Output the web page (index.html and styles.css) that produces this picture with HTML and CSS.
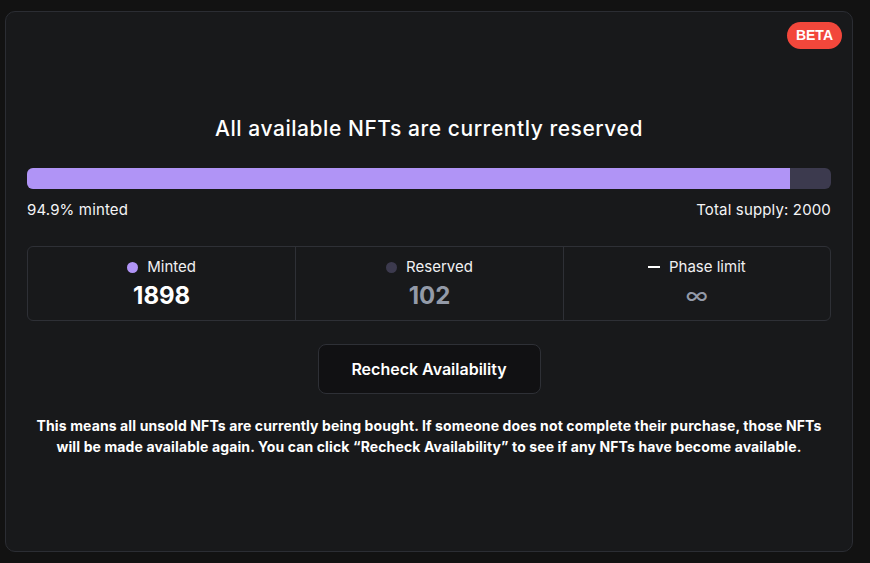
FILE: index.html
```html
<!DOCTYPE html>
<html>
<head>
<meta charset="utf-8">
<link rel="stylesheet" href="styles.css">
</head>
<body>
<div class="card">
  <span class="badge">BETA</span>
  <h1 class="title">All available NFTs are currently reserved</h1>
  <div class="bar"><div class="fill" style="width:94.9%"></div></div>
  <div class="labels">
    <span>94.9% minted</span>
    <span>Total supply: 2000</span>
  </div>
  <div class="stats">
    <div class="stat">
      <div class="stat-label"><span class="dot dot-minted"></span>Minted</div>
      <div class="stat-value">1898</div>
    </div>
    <div class="stat">
      <div class="stat-label"><span class="dot dot-reserved"></span>Reserved</div>
      <div class="stat-value muted">102</div>
    </div>
    <div class="stat">
      <div class="stat-label"><span class="dash"></span>Phase limit</div>
      <div class="stat-value muted inf">∞</div>
    </div>
  </div>
  <div class="actions">
    <button class="btn">Recheck Availability</button>
  </div>
  <p class="note">This means all unsold NFTs are currently being bought. If someone does not complete their purchase, those NFTs will be made available again. You can click “Recheck Availability” to see if any NFTs have become available.</p>
</div>
</body>
</html>
```

FILE: styles.css
```css
* { box-sizing: border-box; }
html, body { margin: 0; padding: 0; }
body {
  background: #121212;
  font-family: Inter, "Noto Sans", sans-serif;
  color: #f2f2f4;
  width: 870px;
  height: 563px;
  padding: 11px 0 0 5px;
}
.card {
  position: relative;
  width: 848px;
  height: 541px;
  background: #18191b;
  border: 1px solid #2b2d33;
  border-radius: 10px;
  padding: 103px 21px 21px;
}
.badge {
  position: absolute;
  top: 10px;
  right: 10px;
  height: 27px;
  padding: 0 9px;
  border-radius: 14px;
  background: #f2473b;
  color: #fff;
  font-family: "Liberation Sans", Arial, sans-serif;
  font-weight: 700;
  font-size: 14px;
  line-height: 27px;
}
.title {
  margin: 0;
  text-align: center;
  font-size: 21px;
  line-height: 28px;
  font-weight: 500;
  letter-spacing: 0.55px;
  color: #fff;
}
.bar {
  margin-top: 25px;
  height: 21px;
  border-radius: 6px;
  background: #3c3a4e;
  overflow: hidden;
}
.fill {
  height: 100%;
  background: #b094f6;
}
.labels {
  margin-top: 11px;
  display: flex;
  justify-content: space-between;
  font-size: 15px;
  line-height: 20px;
  letter-spacing: 0.15px;
  color: #f4f4f6;
}
.stats {
  margin-top: 26px;
  display: grid;
  grid-template-columns: 1fr 1fr 1fr;
  border: 1px solid #2e3036;
  border-radius: 6px;
}
.stat {
  padding: 10px 0 9px;
  display: flex;
  flex-direction: column;
  align-items: center;
  gap: 4px;
}
.stat + .stat { border-left: 1px solid #2e3036; }
.stat-label {
  display: flex;
  align-items: center;
  gap: 9px;
  font-size: 15px;
  line-height: 20px;
  color: #f0f0f2;
}
.dot {
  width: 11px;
  height: 11px;
  border-radius: 50%;
}
.dot-minted { background: #b094f6; }
.dot-reserved { background: #3c3a4e; }
.dash {
  width: 12px;
  height: 2px;
  background: #fff;
}
.stat-value {
  font-size: 24px;
  line-height: 30px;
  font-weight: 700;
  color: #fff;
}
.stat-value.muted { color: #939aa8; }
.stat-value.inf { font-weight: 400; font-size: 24px; }
.actions {
  margin-top: 23px;
  display: flex;
  justify-content: center;
}
.btn {
  width: 223px;
  height: 50px;
  background: #111113;
  border: 1px solid #2e3036;
  border-radius: 8px;
  color: #fff;
  font-family: inherit;
  font-size: 16px;
  font-weight: 600;
}
.note {
  margin: 21px 0 0;
  text-align: center;
  font-size: 14px;
  line-height: 21px;
  font-weight: 700;
  letter-spacing: 0.12px;
  color: #fff;
  padding: 0;
}
```
